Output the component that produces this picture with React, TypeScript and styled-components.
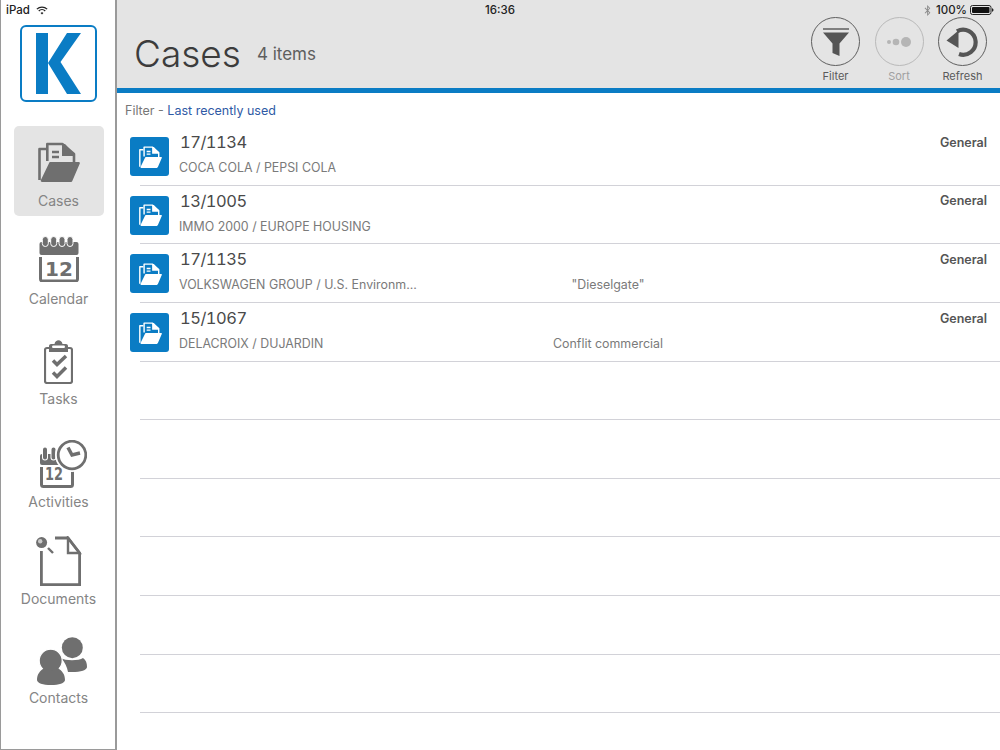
import React from 'react'
import styled, { createGlobalStyle } from 'styled-components'
import { FaBluetoothB } from 'react-icons/fa'

const BLUE = '#0a7cc4'
const GREY = '#6f6f6f'
const DARK = '#555555'

const GlobalStyle = createGlobalStyle`
    html, body {
        margin: 0;
        padding: 0;
        background: #ffffff;
        font-family: Inter, "Liberation Sans", sans-serif;
    }
`

const Screen = styled.div`
    position: relative;
    display: flex;
    width: 1000px;
    height: 750px;
    overflow: hidden;
    background: #ffffff;
`

const StatusBar = styled.div`
    position: absolute;
    top: 0;
    left: 0;
    right: 0;
    height: 20px;
    display: grid;
    grid-template-columns: 1fr auto 1fr;
    align-items: center;
    padding: 0 6px;
    box-sizing: border-box;
    font-size: 11.5px;
    font-weight: 500;
    color: #222222;
`

const StatusLeft = styled.div`
    display: flex;
    align-items: center;
    gap: 6px;
`

const StatusRight = styled.div`
    display: flex;
    align-items: center;
    justify-content: flex-end;
    gap: 3px;
`

const Sidebar = styled.nav`
    flex: 0 0 117px;
    box-sizing: border-box;
    height: 750px;
    border-left: 1px solid #9a9a9a;
    border-right: 2px solid #9a9a9a;
    border-bottom: 1px solid #9a9a9a;
    display: flex;
    flex-direction: column;
    align-items: center;
`

const LogoBox = styled.div`
    margin: 25px 0 0 1px;
    width: 77px;
    height: 77px;
    box-sizing: border-box;
    border: 2px solid ${BLUE};
    border-radius: 6px;
    display: flex;
    align-items: center;
    justify-content: center;
`

const NavItem = styled.div<{ $top: number; $active?: boolean; $gap: number }>`
    margin: ${({ $top }) => $top}px 0 0 1px;
    width: 90px;
    height: 90px;
    border-radius: 5px;
    background: ${({ $active }) => ($active ? '#e4e4e4' : 'transparent')};
    display: flex;
    flex-direction: column;
    align-items: center;
    justify-content: flex-end;
    gap: ${({ $gap }) => $gap}px;
    color: #858585;
    font-size: 14px;
    line-height: 18px;
    padding-bottom: 6px;
    box-sizing: border-box;

    svg {
        display: block;
    }
`

const NavLabel = styled.span`
    white-space: nowrap;
`

const Main = styled.main`
    flex: 1;
    min-width: 0;
    display: flex;
    flex-direction: column;
`

const Header = styled.header`
    height: 93px;
    box-sizing: border-box;
    background: #e4e4e4;
    border-bottom: 5px solid ${BLUE};
    display: flex;
    align-items: flex-end;
    justify-content: space-between;
    padding: 0 13px 0 17px;
`

const TitleGroup = styled.div`
    display: flex;
    align-items: center;
    gap: 16px;
    padding-bottom: 12px;
`

const Title = styled.h1`
    margin: 0;
    font-size: 37px;
    line-height: 44px;
    font-weight: 300;
    color: #3c3c3c;
`

const Count = styled.span`
    font-size: 17px;
    color: #5e5e5e;
`

const Actions = styled.div`
    display: flex;
    gap: 14.5px;
    padding-bottom: 5px;
`

const Action = styled.div<{ $disabled?: boolean }>`
    width: 49px;
    display: flex;
    flex-direction: column;
    align-items: center;
    gap: 3px;
    font-size: 11px;
    line-height: 14px;
    white-space: nowrap;
    color: ${({ $disabled }) => ($disabled ? '#a0a0a0' : '#5a5a5a')};
`

const Round = styled.div<{ $disabled?: boolean }>`
    width: 49px;
    height: 49px;
    box-sizing: border-box;
    border-radius: 50%;
    border: 1.5px solid ${({ $disabled }) => ($disabled ? '#b9b9b9' : '#5f5f5f')};
    display: flex;
    align-items: center;
    justify-content: center;
`

const FilterLine = styled.div`
    height: 34.3px;
    box-sizing: border-box;
    padding: 9px 0 0 8px;
    font-size: 12.5px;
    line-height: 18px;
    color: #777777;
`

const FilterValue = styled.span`
    color: #2f5aa5;
`

const Row = styled.div`
    position: relative;
    height: 58.6px;
    box-sizing: border-box;
    margin-left: 23px;
    border-bottom: 1px solid #d2d2d8;
`

const RowIcon = styled.div`
    position: absolute;
    left: -10px;
    top: 10px;
    width: 39px;
    height: 39px;
    border-radius: 3px;
    background: ${BLUE};
    display: flex;
    align-items: center;
    justify-content: center;
    padding-left: 2px;
    box-sizing: border-box;
`

const RowBody = styled.div`
    margin-left: 39px;
    padding: 4px 13px 0 0;
    display: flex;
    flex-direction: column;
`

const RowTop = styled.div`
    display: flex;
    align-items: center;
    justify-content: space-between;
    height: 22px;
`

const CaseNumber = styled.span`
    margin-left: 1px;
    font-size: 16.5px;
    font-variant-numeric: tabular-nums;
    letter-spacing: -0.5px;
    color: #4a4a4a;
`

const CaseType = styled.span`
    font-size: 12.5px;
    font-weight: 600;
    color: #555555;
`

const RowBottom = styled.div`
    display: grid;
    grid-template-columns: 241px 376px;
    margin-top: 7px;
    font-size: 12.4px;
    line-height: 16px;
    color: #7a7a7a;
`

const Remark = styled.span`
    text-align: center;
`

const Battery = () => (
    <svg width="24" height="10" viewBox="0 0 24 10">
        <rect x="0.5" y="0.5" width="20.5" height="9" rx="2" fill="none" stroke="#222" />
        <rect x="2" y="2" width="17.5" height="6" rx="1" fill="#111" />
        <path d="M22 3.2c1 .2 1.5 1 1.5 1.8s-.5 1.6-1.5 1.8z" fill="#222" />
    </svg>
)

const Wifi = () => (
    <svg width="12" height="9" viewBox="0 0 14 10" fill="none" stroke="#222" strokeWidth="1.5">
        <path d="M1 3.4a8.6 8.6 0 0 1 12 0" />
        <path d="M3.2 5.6a5.4 5.4 0 0 1 7.6 0" />
        <path d="M7 9.6 5.3 7.8a2.4 2.4 0 0 1 3.4 0z" fill="#222" stroke="none" />
    </svg>
)

const FolderIcon = ({ size, color }: { size: number; color: string }) => (
    <svg width={size} height={(size * 40) / 42} viewBox="0 0 42 40">
        <path d="M1.500 38V7H8" fill="none" stroke={color} strokeWidth="2.600" strokeLinejoin="round" />
        <path d="M9.300 19V2h15L36 12v8" fill="none" stroke={color} strokeWidth="2.600" strokeLinejoin="round" />
        <path d="M24 2h3l9 10v2H24z" fill={color} />
        <path d="M14 10h7M14 15h7" stroke={color} strokeWidth="2.400" />
        <path
            d="M12.500 20H40.500c1 0 1.600.7 1.300 1.600L34.500 38.500c-.4 1-1 1.500-2 1.500H4c-1 0-1.500-.8-1.200-1.700L11 21.300c.3-.9.700-1.300 1.500-1.300z"
            fill={color}
        />
    </svg>
)

const CalendarIcon = () => (
    <svg width="40" height="46" viewBox="0 0 40 46">
        <rect x="0.500" y="6" width="39" height="13" rx="2" fill={GREY} />
        {[6.3, 14.7, 23, 31].map((x) => (
            <rect key={x} x={x - 3} y="0.500" width="6" height="10" rx="3" fill={GREY} stroke="#ffffff" strokeWidth="1" />
        ))}
        <path d="M1.500 21v22a2 2 0 0 0 2 2h33a2 2 0 0 0 2-2V21" fill="none" stroke={GREY} strokeWidth="3" />
        <text x="20" y="40" textAnchor="middle" fontFamily="'DejaVu Sans', sans-serif" fontWeight="700" fontSize="20" fill={GREY}>
            12
        </text>
    </svg>
)

const TasksIcon = () => (
    <svg width="29" height="44" viewBox="0 0 29 44">
        <path d="M6 8H3a2 2 0 0 0-2 2v31a2 2 0 0 0 2 2h23a2 2 0 0 0 2-2V10a2 2 0 0 0-2-2h-3" fill="none" stroke={GREY} strokeWidth="2.200" />
        <path d="M5 12V6c0-1.200 1-2 2-2h3.500C11 1.500 12.700.3 14.500.3S18 1.500 18.500 4H22c1 0 2 .8 2 2v6z" fill={GREY} />
        <rect x="8" y="5.500" width="13" height="2.500" rx="1.200" fill="#ffffff" />
        <path d="M9 20.500l4 4L22 16M9 32.500l4 4 9-9" fill="none" stroke={GREY} strokeWidth="3.500" />
    </svg>
)

const ActivitiesIcon = () => (
    <svg width="56" height="48" viewBox="-8 0 56 48">
        <rect x="1" y="14" width="26" height="11" rx="2" fill={GREY} />
        <path d="M6 9.500v8M14.500 9.500v8" stroke="#ffffff" strokeWidth="6" strokeLinecap="round" />
        <path d="M6 9.500v8M14.500 9.500v8" stroke={GREY} strokeWidth="4" strokeLinecap="round" />
        <path d="M2.500 27v17.500a2 2 0 0 0 2 2h27a2 2 0 0 0 2-2V30" fill="none" stroke={GREY} strokeWidth="3" />
        <text
            x="15"
            y="40"
            textAnchor="middle"
            fontFamily="'DejaVu Sans', sans-serif"
            fontWeight="700"
            fontSize="17"
            textLength={18}
            lengthAdjust="spacingAndGlyphs"
            fill={GREY}
        >
            12
        </text>
        <circle cx="33" cy="15" r="17" fill="#ffffff" />
        <circle cx="33" cy="15" r="13.800" fill="none" stroke={GREY} strokeWidth="2.800" />
        <path d="M29 7.500l4 7.500 8-2" fill="none" stroke={GREY} strokeWidth="3.500" />
    </svg>
)

const DocumentsIcon = () => (
    <svg width="46" height="50" viewBox="0 0 46 50">
        <path d="M5.400 15v33.600h38.200V17L32 2H19" fill="none" stroke={GREY} strokeWidth="2.800" />
        <path d="M32 2v15h11.600z" fill="none" stroke={GREY} strokeWidth="2.400" />
        <circle cx="5.600" cy="6.600" r="5.500" fill={GREY} />
        <circle cx="4.200" cy="5.200" r="2.200" fill="#c9c9c9" />
        <path d="M12 12l5 5" stroke={GREY} strokeWidth="2.400" />
    </svg>
)

const ContactsIcon = () => (
    <svg width="56" height="48" viewBox="-6 0 56 48">
        <circle cx="35.300" cy="10.700" r="10.500" fill={GREY} />
        <path d="M24 21c4 3 18 3 22 0 3 2 4 5 4 9 0 3-6 5-15 5h-4c-1-5-3-10-7-14z" fill={GREY} />
        <circle cx="13.700" cy="23.700" r="11.500" fill={GREY} stroke="#ffffff" strokeWidth="1.200" />
        <path d="M0 43c0-6 3-9 7-12 4 3 10 3 14 0 4 3 7 6 7 12 0 3-6 5-14 5S0 46 0 43z" fill={GREY} />
    </svg>
)

const LogoMark = () => (
    <svg width="45" height="61" viewBox="0 0 45 61">
        <path d="M0 0h12v61H0zM31 0h14L24.500 29 45 61H31L12 30z" fill={BLUE} />
    </svg>
)

const FilterGlyph = () => (
    <svg width="28" height="28" viewBox="0 0 28 28">
        <path d="M1 1h26" stroke={DARK} strokeWidth="1.400" />
        <path d="M1 4.500h26L17.500 15.500V28L10.500 25V15.500z" fill={DARK} />
    </svg>
)

const SortGlyph = () => (
    <svg width="26" height="12" viewBox="0 0 26 12" fill="#b5b5b5">
        <circle cx="3" cy="6" r="2" />
        <circle cx="10" cy="6" r="3.300" />
        <circle cx="20" cy="6" r="5" />
    </svg>
)

const RefreshGlyph = () => (
    <svg width="34" height="32" viewBox="0 0 34 32" fill="none">
        <path d="M11 5.300A12.500 12.500 0 1 1 13 28" stroke={DARK} strokeWidth="4.200" />
        <path d="M0.500 14.500 12.500 4.500V22z" fill={DARK} />
    </svg>
)

const navItems = [
    { label: 'Cases', top: 24, gap: 10, active: true, icon: <FolderIcon size={42} color={GREY} /> },
    { label: 'Calendar', top: 8, gap: 8, icon: <CalendarIcon /> },
    { label: 'Tasks', top: 10, gap: 6, icon: <TasksIcon /> },
    { label: 'Activities', top: 13, gap: 5, icon: <ActivitiesIcon /> },
    { label: 'Documents', top: 7, gap: 4, icon: <DocumentsIcon /> },
    { label: 'Contacts', top: 9, gap: 4, icon: <ContactsIcon /> },
]

const cases = [
    { id: '17/1134', parties: 'COCA COLA / PEPSI COLA', remark: '' },
    { id: '13/1005', parties: 'IMMO 2000 / EUROPE HOUSING', remark: '' },
    { id: '17/1135', parties: 'VOLKSWAGEN GROUP / U.S. Environm...', remark: '"Dieselgate"' },
    { id: '15/1067', parties: 'DELACROIX / DUJARDIN', remark: 'Conflit commercial' },
]

const App: React.FunctionComponent = () => {
    return (
        <>
            <GlobalStyle />
            <Screen>
                <Sidebar>
                    <LogoBox>
                        <LogoMark />
                    </LogoBox>
                    {navItems.map((item) => (
                        <NavItem key={item.label} $top={item.top} $gap={item.gap} $active={item.active}>
                            {item.icon}
                            <NavLabel>{item.label}</NavLabel>
                        </NavItem>
                    ))}
                </Sidebar>

                <Main>
                    <Header>
                        <TitleGroup>
                            <Title>Cases</Title>
                            <Count>4 items</Count>
                        </TitleGroup>
                        <Actions>
                            <Action>
                                <Round>
                                    <FilterGlyph />
                                </Round>
                                Filter
                            </Action>
                            <Action $disabled>
                                <Round $disabled>
                                    <SortGlyph />
                                </Round>
                                Sort
                            </Action>
                            <Action>
                                <Round>
                                    <RefreshGlyph />
                                </Round>
                                Refresh
                            </Action>
                        </Actions>
                    </Header>

                    <FilterLine>
                        Filter - <FilterValue>Last recently used</FilterValue>
                    </FilterLine>

                    {cases.map((item) => (
                        <Row key={item.id}>
                            <RowIcon>
                                <FolderIcon size={23} color="#ffffff" />
                            </RowIcon>
                            <RowBody>
                                <RowTop>
                                    <CaseNumber>{item.id}</CaseNumber>
                                    <CaseType>General</CaseType>
                                </RowTop>
                                <RowBottom>
                                    <span>{item.parties}</span>
                                    <Remark>{item.remark}</Remark>
                                </RowBottom>
                            </RowBody>
                        </Row>
                    ))}
                    {[0, 1, 2, 3, 4, 5].map((index) => (
                        <Row key={index} />
                    ))}
                </Main>

                <StatusBar>
                    <StatusLeft>
                        iPad
                        <Wifi />
                    </StatusLeft>
                    <span>16:36</span>
                    <StatusRight>
                        <FaBluetoothB size={11} color="#8a8a8a" />
                        100%
                        <Battery />
                    </StatusRight>
                </StatusBar>
            </Screen>
        </>
    )
}

export default App
